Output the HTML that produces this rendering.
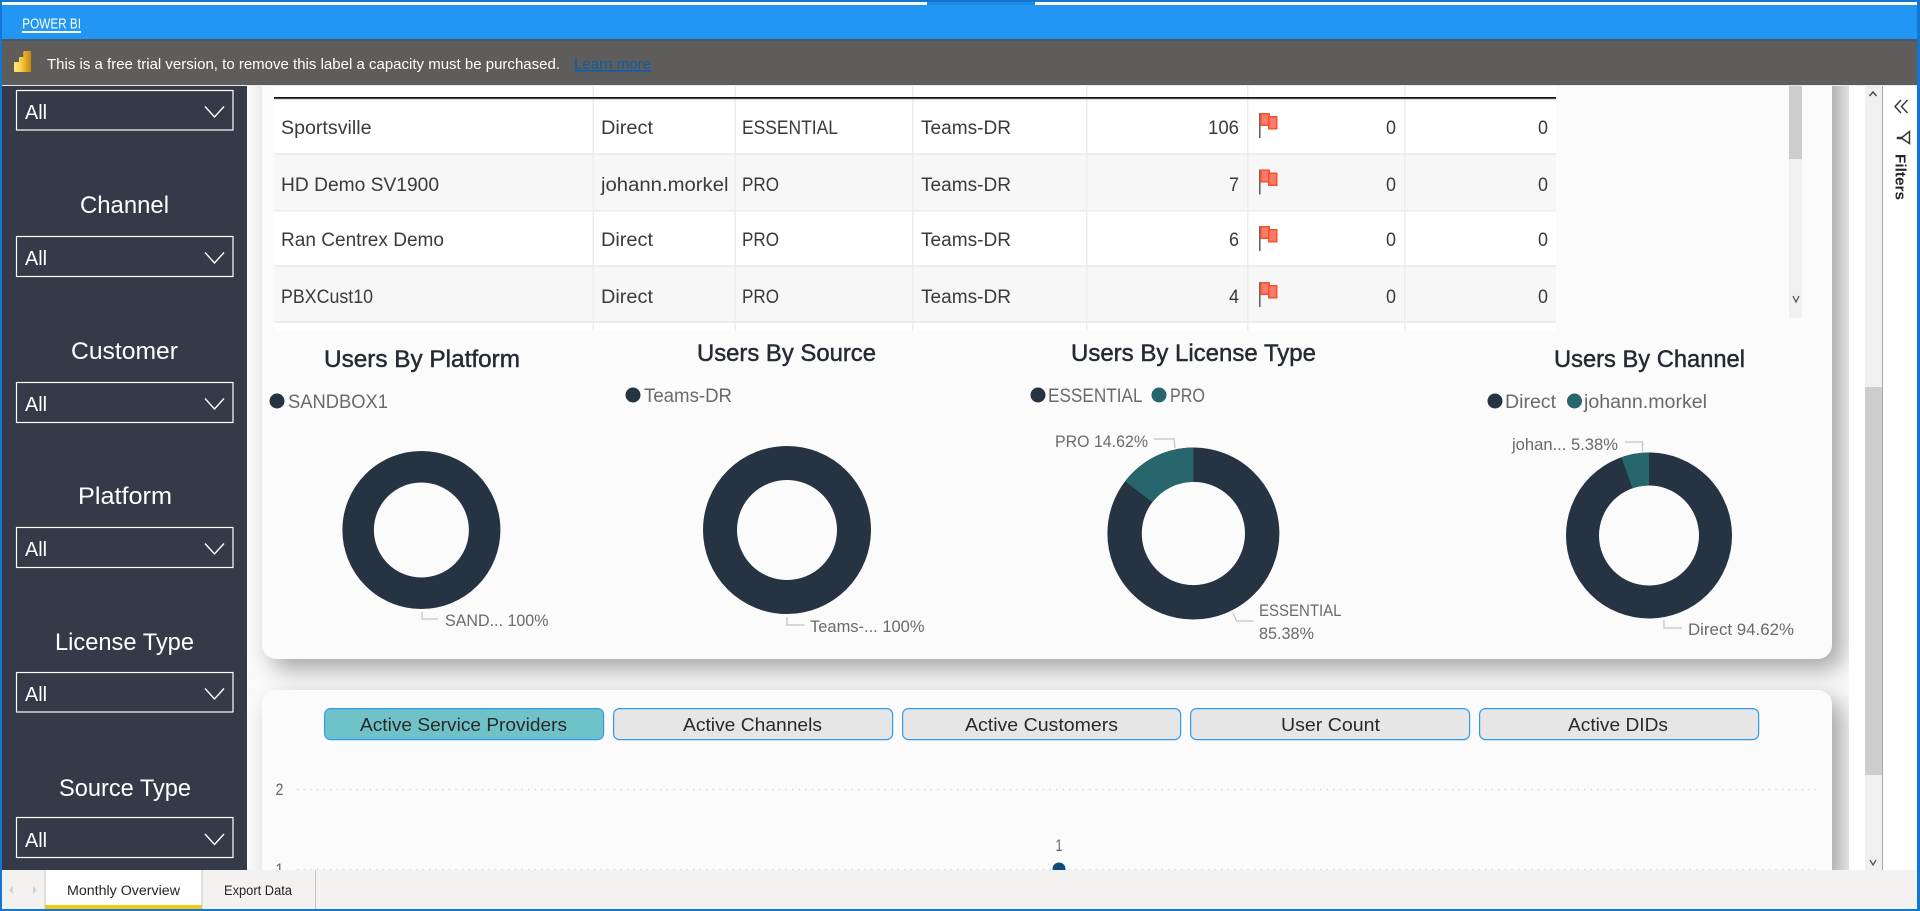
<!DOCTYPE html>
<html lang="en"><head><meta charset="utf-8"><title>Power BI</title>
<style>
html,body{margin:0;padding:0;width:1920px;height:911px;overflow:hidden;background:#fff;font-family:"Liberation Sans",sans-serif}
#content{position:absolute;left:247px;top:86px;width:1602px;height:784px;overflow:hidden;background:#fafafa}
.card{position:absolute;left:15px;width:1570px;background:#fbfbfb;border-radius:14px;box-shadow:10px 10px 24px rgba(0,0,0,.35)}
#c1{top:-40px;height:613px}
#c2{top:604px;height:190px;border-radius:14px 14px 0 0}
svg{position:absolute;left:0;top:0;display:block}
text{font-family:"Liberation Sans",sans-serif}
.side{fill:#fff;font-size:24px}
.all{fill:#fff;font-size:20px}
.td{fill:#3a3a3a;font-size:19px}
.title{fill:#252a33;font-size:24px;stroke:#252a33;stroke-width:.45}
.leg{fill:#6a6a6a;font-size:19px}
.lab{fill:#6a6a6a;font-size:17px}
.btn{fill:#2a2a2a;font-size:18.5px}
.tab{fill:#252423;font-size:13.5px}
</style></head><body>
<div id="content"><div class="card" id="c1"></div><div class="card" id="c2"></div></div>
<svg width="1920" height="911" viewBox="0 0 1920 911" xmlns="http://www.w3.org/2000/svg">
<defs>
<g id="flag"><rect x="1259" y="113" width="1.6" height="25" fill="#666"/><rect x="1260.8" y="113.8" width="8.4" height="11.4" fill="#fb7c6c" stroke="#f5532d" stroke-width="1.6"/><rect x="1268.8" y="116.8" width="7.9" height="11.9" fill="#fb7c6c" stroke="#f5532d" stroke-width="1.6"/></g>
<path id="chev" d="M0 0 L9.500 10.500 L19 0" fill="none" stroke="#fff" stroke-width="1.400"/>
<linearGradient id="pb1" x1="0" y1="0" x2="1" y2="0"><stop offset="0" stop-color="#eab52a"/><stop offset="1" stop-color="#c98a0f"/></linearGradient>
<linearGradient id="pb2" x1="0" y1="0" x2="1" y2="0"><stop offset="0" stop-color="#f8d654"/><stop offset="1" stop-color="#e6ae25"/></linearGradient>
<linearGradient id="pb3" x1="0" y1="0" x2="1" y2="0"><stop offset="0" stop-color="#ffe97e"/><stop offset="1" stop-color="#f6cf4a"/></linearGradient>
</defs>

<!-- top chrome -->
<rect x="0" y="0" width="1920" height="2" fill="#1277d2"/>
<rect x="0" y="2" width="1920" height="3" fill="#fff"/>
<rect x="927" y="2" width="108" height="3" fill="#1e88e5"/>
<rect x="0" y="5" width="1920" height="34" fill="#2196f3"/>
<rect x="0" y="39" width="1920" height="2" fill="#46586a"/>
<rect x="0" y="41" width="1920" height="44" fill="#5e5d5b"/>
<rect x="0" y="85" width="1920" height="1" fill="#e8e8e8"/>
<text x="22.300" y="28.500" font-size="14.500" fill="#fff" textLength="58.700" lengthAdjust="spacingAndGlyphs">POWER BI</text>
<rect x="22" y="31" width="59" height="2" fill="#fff"/>
<rect x="23.300" y="51" width="7.700" height="21" rx="1" fill="url(#pb1)"/>
<rect x="19" y="57" width="7" height="15" rx="1" fill="url(#pb2)"/>
<rect x="14" y="62" width="7.700" height="10" rx="1" fill="url(#pb3)"/>
<text x="47" y="69" font-size="15" fill="#fff" textLength="513" lengthAdjust="spacingAndGlyphs">This is a free trial version, to remove this label a capacity must be purchased.</text>
<text x="574" y="69" font-size="15" fill="#0e5da6" text-decoration="underline" textLength="77" lengthAdjust="spacingAndGlyphs">Learn more</text>

<!-- sidebar -->
<rect x="2" y="86" width="245" height="784" fill="#343a48"/>
<g fill="none" stroke="#fff" stroke-width="1.200">
<rect x="16.500" y="90.500" width="216.500" height="39.500"/>
<rect x="16.500" y="236.500" width="216.500" height="40"/>
<rect x="16.500" y="382.500" width="216.500" height="40"/>
<rect x="16.500" y="527.500" width="216.500" height="40"/>
<rect x="16.500" y="672.500" width="216.500" height="39.500"/>
<rect x="16.500" y="817.500" width="216.500" height="40"/>
</g>
<text class="all" x="25" y="119" textLength="22" lengthAdjust="spacingAndGlyphs">All</text>
<text class="all" x="25" y="265" textLength="22" lengthAdjust="spacingAndGlyphs">All</text>
<text class="all" x="25" y="411" textLength="22" lengthAdjust="spacingAndGlyphs">All</text>
<text class="all" x="25" y="556" textLength="22" lengthAdjust="spacingAndGlyphs">All</text>
<text class="all" x="25" y="701" textLength="22" lengthAdjust="spacingAndGlyphs">All</text>
<text class="all" x="25" y="847" textLength="22" lengthAdjust="spacingAndGlyphs">All</text>
<use href="#chev" x="205" y="106.500"/>
<use href="#chev" x="205" y="252.500"/>
<use href="#chev" x="205" y="398.500"/>
<use href="#chev" x="205" y="543.500"/>
<use href="#chev" x="205" y="688.500"/>
<use href="#chev" x="205" y="834"/>
<text class="side" x="80" y="213" textLength="89" lengthAdjust="spacingAndGlyphs">Channel</text>
<text class="side" x="71" y="359" textLength="107" lengthAdjust="spacingAndGlyphs">Customer</text>
<text class="side" x="78" y="504" textLength="94" lengthAdjust="spacingAndGlyphs">Platform</text>
<text class="side" x="55" y="650" textLength="139" lengthAdjust="spacingAndGlyphs">License Type</text>
<text class="side" x="59" y="796" textLength="132" lengthAdjust="spacingAndGlyphs">Source Type</text>

<!-- table -->
<rect x="274" y="86" width="1282" height="245" fill="#fff"/>
<rect x="274" y="155" width="1282" height="54" fill="#f7f7f7"/>
<rect x="274" y="267" width="1282" height="54.500" fill="#f7f7f7"/>
<g fill="#ededed">
<rect x="274" y="153" width="1282" height="2"/><rect x="274" y="209.500" width="1282" height="2"/><rect x="274" y="265" width="1282" height="2"/><rect x="274" y="321" width="1282" height="2"/>
<rect x="592.500" y="86" width="1.500" height="245"/><rect x="734.500" y="86" width="1.500" height="245"/><rect x="912" y="86" width="1.500" height="245"/><rect x="1086" y="86" width="1.500" height="245"/><rect x="1247" y="86" width="1.500" height="245"/><rect x="1404" y="86" width="1.500" height="245"/>
</g>
<rect x="274" y="97" width="1282" height="1.500" fill="#111"/>
<rect x="274" y="98.500" width="1282" height=".8" fill="#888"/>
<g class="rows">
<text class="td" x="281" y="134" textLength="90.500" lengthAdjust="spacingAndGlyphs">Sportsville</text>
<text class="td" x="601" y="134" textLength="52" lengthAdjust="spacingAndGlyphs">Direct</text>
<text class="td" x="742" y="134" textLength="96" lengthAdjust="spacingAndGlyphs">ESSENTIAL</text>
<text class="td" x="921" y="134" textLength="90" lengthAdjust="spacingAndGlyphs">Teams-DR</text>
<text class="td" x="1208" y="134" textLength="31" lengthAdjust="spacingAndGlyphs">106</text>
<text class="td" x="1386" y="134" textLength="10" lengthAdjust="spacingAndGlyphs">0</text>
<text class="td" x="1538" y="134" textLength="10" lengthAdjust="spacingAndGlyphs">0</text>

<text class="td" x="281" y="191" textLength="158" lengthAdjust="spacingAndGlyphs">HD Demo SV1900</text>
<text class="td" x="601" y="191" textLength="127.500" lengthAdjust="spacingAndGlyphs">johann.morkel</text>
<text class="td" x="742" y="191" textLength="37" lengthAdjust="spacingAndGlyphs">PRO</text>
<text class="td" x="921" y="191" textLength="90" lengthAdjust="spacingAndGlyphs">Teams-DR</text>
<text class="td" x="1229" y="191" textLength="10" lengthAdjust="spacingAndGlyphs">7</text>
<text class="td" x="1386" y="191" textLength="10" lengthAdjust="spacingAndGlyphs">0</text>
<text class="td" x="1538" y="191" textLength="10" lengthAdjust="spacingAndGlyphs">0</text>

<text class="td" x="281" y="246" textLength="163" lengthAdjust="spacingAndGlyphs">Ran Centrex Demo</text>
<text class="td" x="601" y="246" textLength="52" lengthAdjust="spacingAndGlyphs">Direct</text>
<text class="td" x="742" y="246" textLength="37" lengthAdjust="spacingAndGlyphs">PRO</text>
<text class="td" x="921" y="246" textLength="90" lengthAdjust="spacingAndGlyphs">Teams-DR</text>
<text class="td" x="1229" y="246" textLength="10" lengthAdjust="spacingAndGlyphs">6</text>
<text class="td" x="1386" y="246" textLength="10" lengthAdjust="spacingAndGlyphs">0</text>
<text class="td" x="1538" y="246" textLength="10" lengthAdjust="spacingAndGlyphs">0</text>

<text class="td" x="281" y="303" textLength="92" lengthAdjust="spacingAndGlyphs">PBXCust10</text>
<text class="td" x="601" y="303" textLength="52" lengthAdjust="spacingAndGlyphs">Direct</text>
<text class="td" x="742" y="303" textLength="37" lengthAdjust="spacingAndGlyphs">PRO</text>
<text class="td" x="921" y="303" textLength="90" lengthAdjust="spacingAndGlyphs">Teams-DR</text>
<text class="td" x="1229" y="303" textLength="10" lengthAdjust="spacingAndGlyphs">4</text>
<text class="td" x="1386" y="303" textLength="10" lengthAdjust="spacingAndGlyphs">0</text>
<text class="td" x="1538" y="303" textLength="10" lengthAdjust="spacingAndGlyphs">0</text>
</g>
<use href="#flag"/>
<use href="#flag" y="56.500"/>
<use href="#flag" y="113"/>
<use href="#flag" y="169"/>

<!-- table scrollbar -->
<rect x="1789" y="86" width="13" height="232" fill="#f0f0f0"/>
<rect x="1789" y="86" width="13" height="73" fill="#cdcdcd"/>
<path d="M1793 296 L1796 302 L1799 296" fill="none" stroke="#555" stroke-width="1.300"/>

<!-- donuts -->
<g fill="none" stroke="#263342">
<circle cx="421.400" cy="530" r="63.250" stroke-width="31.500"/>
<circle cx="787" cy="530" r="67" stroke-width="34"/>
<circle cx="1193.400" cy="533.500" r="68.800" stroke-width="34.400"/>
<circle cx="1649" cy="535.500" r="66.500" stroke-width="33"/>
</g>
<path d="M1193.400 447.500 A86 86 0 0 0 1125 481.300 L1152.400 502.200 A51.600 51.600 0 0 1 1193.400 481.900 Z" fill="#28666e"/>
<path d="M1649 452.500 A83 83 0 0 0 1621.500 457.200 L1632.400 488.300 A50 50 0 0 1 1649 485.500 Z" fill="#28666e"/>

<text class="title" x="324" y="367" textLength="196" lengthAdjust="spacingAndGlyphs">Users By Platform</text>
<text class="title" x="697" y="361" textLength="179" lengthAdjust="spacingAndGlyphs">Users By Source</text>
<text class="title" x="1071" y="361" textLength="245" lengthAdjust="spacingAndGlyphs">Users By License Type</text>
<text class="title" x="1554" y="367" textLength="191" lengthAdjust="spacingAndGlyphs">Users By Channel</text>

<g fill="#263342"><circle cx="277" cy="401" r="7.500"/><circle cx="633" cy="395" r="7.500"/><circle cx="1038" cy="395" r="7.500"/><circle cx="1495" cy="401" r="7.500"/></g>
<g fill="#28666e"><circle cx="1159" cy="395" r="7.500"/><circle cx="1574.500" cy="401" r="7.500"/></g>
<text class="leg" x="288" y="408" textLength="100" lengthAdjust="spacingAndGlyphs">SANDBOX1</text>
<text class="leg" x="644" y="402" textLength="88" lengthAdjust="spacingAndGlyphs">Teams-DR</text>
<text class="leg" x="1048" y="402" textLength="94.500" lengthAdjust="spacingAndGlyphs">ESSENTIAL</text>
<text class="leg" x="1170" y="402" textLength="35" lengthAdjust="spacingAndGlyphs">PRO</text>
<text class="leg" x="1505" y="408" textLength="51" lengthAdjust="spacingAndGlyphs">Direct</text>
<text class="leg" x="1584" y="408" textLength="123" lengthAdjust="spacingAndGlyphs">johann.morkel</text>

<g fill="none" stroke="#c4c4c4" stroke-width="1.300">
<path d="M422 612 V619 H438"/>
<path d="M787 617 V625 H804.500"/>
<path d="M1154 439 H1174 L1175 448"/>
<path d="M1233 613 L1236.500 621 H1253.500"/>
<path d="M1625 442 H1642.500 V451"/>
<path d="M1664 620 V628 H1682"/>
</g>
<text class="lab" x="445" y="626" textLength="103.500" lengthAdjust="spacingAndGlyphs">SAND... 100%</text>
<text class="lab" x="810" y="632" textLength="114.500" lengthAdjust="spacingAndGlyphs">Teams-... 100%</text>
<text class="lab" x="1055" y="447" textLength="93" lengthAdjust="spacingAndGlyphs">PRO 14.62%</text>
<text class="lab" x="1259" y="616" textLength="82.500" lengthAdjust="spacingAndGlyphs">ESSENTIAL</text>
<text class="lab" x="1259" y="639" textLength="55" lengthAdjust="spacingAndGlyphs">85.38%</text>
<text class="lab" x="1512" y="450" textLength="106" lengthAdjust="spacingAndGlyphs">johan... 5.38%</text>
<text class="lab" x="1688" y="635" textLength="106" lengthAdjust="spacingAndGlyphs">Direct 94.62%</text>

<!-- buttons -->
<g stroke="#2e9bf0" stroke-width="1.200">
<rect x="324.600" y="708.600" width="279" height="31" rx="6" fill="#6fc2c8"/>
<rect x="613.600" y="708.600" width="279" height="31" rx="6" fill="#e6e6e6"/>
<rect x="902.600" y="708.600" width="278" height="31" rx="6" fill="#e6e6e6"/>
<rect x="1190.600" y="708.600" width="279" height="31" rx="6" fill="#e6e6e6"/>
<rect x="1479.600" y="708.600" width="279" height="31" rx="6" fill="#e6e6e6"/>
</g>
<text class="btn" x="360" y="731" textLength="207" lengthAdjust="spacingAndGlyphs">Active Service Providers</text>
<text class="btn" x="683" y="731" textLength="139" lengthAdjust="spacingAndGlyphs">Active Channels</text>
<text class="btn" x="965" y="731" textLength="153" lengthAdjust="spacingAndGlyphs">Active Customers</text>
<text class="btn" x="1281" y="731" textLength="99" lengthAdjust="spacingAndGlyphs">User Count</text>
<text class="btn" x="1568" y="731" textLength="100" lengthAdjust="spacingAndGlyphs">Active DIDs</text>

<!-- line chart -->
<path d="M297 789.500 H1816 M297 869.500 H1816" stroke="#d2d2d2" stroke-width="1.300" stroke-dasharray="1.300 5.300" fill="none"/>
<text x="275.500" y="795" font-size="17" fill="#666" textLength="8" lengthAdjust="spacingAndGlyphs">2</text>
<text x="275.500" y="875" font-size="17" fill="#666" textLength="8" lengthAdjust="spacingAndGlyphs">1</text>
<text x="1055.500" y="851" font-size="16.500" fill="#666" textLength="7" lengthAdjust="spacingAndGlyphs">1</text>
<circle cx="1059" cy="869" r="6.500" fill="#0f4c81"/>

<!-- page scrollbar -->
<rect x="1865" y="86" width="17" height="784" fill="#f0f0f0"/>
<rect x="1865" y="387" width="17" height="388" fill="#cdcdcd"/>
<path d="M1869.500 96 L1873 92 L1876.500 96" fill="none" stroke="#555" stroke-width="1.700"/>
<path d="M1870 860 L1873 865 L1876 860" fill="none" stroke="#555" stroke-width="1.300"/>

<!-- filters pane -->
<rect x="1882" y="86" width="1" height="784" fill="#a8a8a8"/>
<path d="M1901 100 L1895 106.500 L1901 113 M1907.500 100 L1901.500 106.500 L1907.500 113" fill="none" stroke="#333" stroke-width="1.400"/>
<path d="M1897.500 137.500 H1902 L1909.500 131.500 V143.500 L1902 138.500 H1897.500 Z" fill="none" stroke="#333" stroke-width="1.500"/>
<text transform="translate(1895.500,154) rotate(90)" font-size="15" font-weight="700" fill="#252423" textLength="46" lengthAdjust="spacingAndGlyphs">Filters</text>

<!-- tab bar -->
<rect x="0" y="870" width="1920" height="41" fill="#f3f2f1"/>
<rect x="45" y="870" width="156.500" height="39" fill="#fff"/>
<rect x="45" y="905" width="156.500" height="4" fill="#f2c811"/>
<rect x="44.500" y="870" width="1" height="39" fill="#c8c6c4"/>
<rect x="201.500" y="870" width="1" height="39" fill="#c8c6c4"/>
<rect x="315" y="870" width="1" height="39" fill="#c8c6c4"/>
<path d="M13 886 L9 890 L13 894 Z M33 886 L37 890 L33 894 Z" fill="#d4d2d0"/>
<text class="tab" x="67" y="895" textLength="113" lengthAdjust="spacingAndGlyphs">Monthly Overview</text>
<text class="tab" x="224" y="895" textLength="68" lengthAdjust="spacingAndGlyphs">Export Data</text>

<!-- window border -->
<rect x="0" y="909" width="1920" height="2" fill="#1277d2"/>
<rect x="0" y="0" width="2" height="911" fill="#1277d2"/>
<rect x="1917" y="0" width="3" height="911" fill="#1277d2"/>
</svg>
</body></html>
